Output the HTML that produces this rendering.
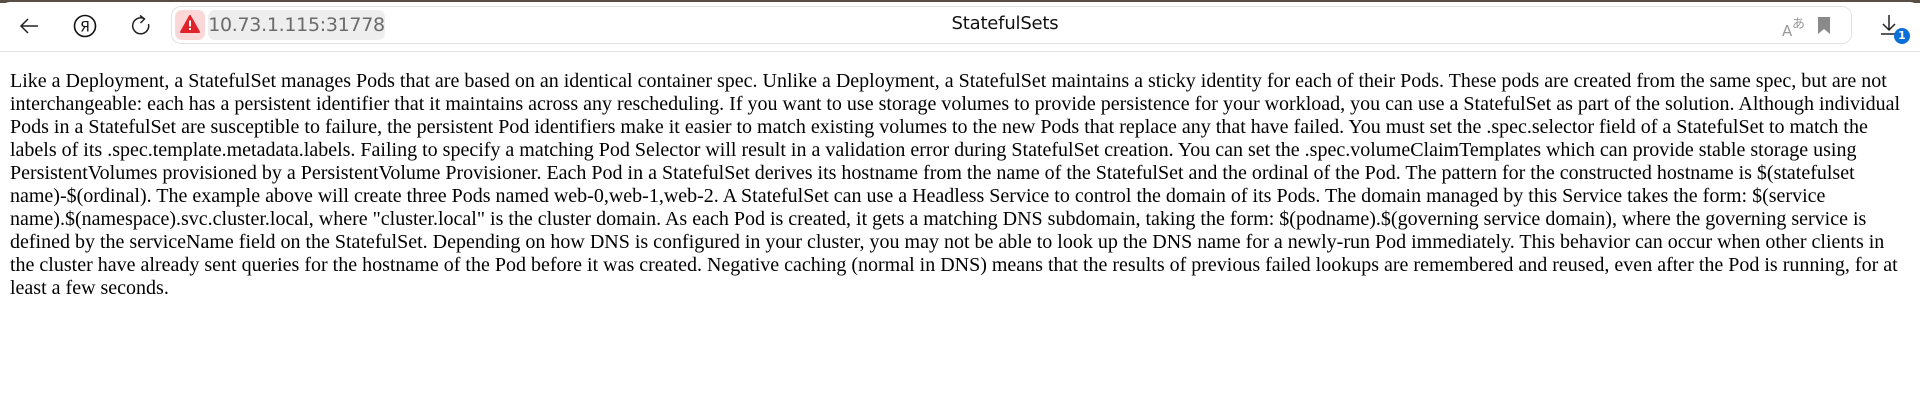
<!DOCTYPE html>
<html><head><meta charset="utf-8"><style>
html,body{margin:0;padding:0;background:#fff;width:1920px;height:400px;overflow:hidden}
.top{position:absolute;left:0;top:0;width:1920px;height:3px;background:#5a4e44}
.bar{position:absolute;left:0;top:2px;width:1920px;height:49px;background:#fff;border-bottom:1px solid #e3e3e3;border-radius:10px 10px 0 0}
.addr{position:absolute;left:171px;top:6px;width:1681px;height:38px;border:1px solid #e2e2e2;border-radius:10px;box-sizing:border-box}
.warn{position:absolute;left:175px;top:10px;width:30px;height:30px;background:#fbd7d8;border-radius:7px}
.url{position:absolute;left:208px;top:10px;width:177px;height:30px;background:#eeeeee;border-radius:7px;font:19px "DejaVu Sans","Liberation Sans",sans-serif;color:#6b6b6b;line-height:30px;text-align:center;letter-spacing:-0.3px}
.title{position:absolute;left:0;width:2010px;top:13px;text-align:center;font:18px "DejaVu Sans","Liberation Sans",sans-serif;color:#111;letter-spacing:-0.2px}
p{position:absolute;left:10px;top:70px;margin:0;font:20px/23px "Liberation Serif",serif;color:#000;white-space:nowrap}
</style></head><body>
<div class="top"></div>
<div class="bar"></div>
<svg style="position:absolute;left:18px;top:15px" width="22" height="22" viewBox="0 0 22 22"><path d="M20 11H3M10 4L3 11l7 7" fill="none" stroke="#222" stroke-width="1.5"/></svg>
<svg style="position:absolute;left:73px;top:14px" width="24" height="24" viewBox="0 0 24 24"><circle cx="12" cy="12" r="10.5" fill="none" stroke="#111" stroke-width="1.6"/><text x="12" y="17.5" text-anchor="middle" font-family="DejaVu Sans" font-size="14" fill="#111">Я</text></svg>
<svg style="position:absolute;left:130px;top:14px" width="22" height="24" viewBox="0 0 22 24"><path d="M14 4.5A8 8 0 1 0 18.5 10" fill="none" stroke="#222" stroke-width="1.5"/><path d="M10 1.5l4.5 3.5-4 4" fill="none" stroke="#222" stroke-width="1.5"/></svg>
<div class="addr"></div>
<div class="warn"></div>
<svg style="position:absolute;left:180px;top:15px" width="20" height="18" viewBox="0 0 20 18"><path d="M10 1L19 17H1Z" fill="#e0222b" stroke="#e0222b" stroke-width="2" stroke-linejoin="round"/><rect x="9" y="5.5" width="2" height="6" fill="#fff"/><rect x="9" y="13" width="2" height="2" fill="#fff"/></svg>
<div class="url">10.73.1.115:31778</div>
<div class="title">StatefulSets</div>
<div style="position:absolute;left:1782px;top:22px;font:15px 'DejaVu Sans',sans-serif;color:#999">A</div>
<div style="position:absolute;left:1792px;top:13px;font:13px 'Noto Sans CJK JP',sans-serif;color:#999">あ</div>
<svg style="position:absolute;left:1818px;top:17px" width="12" height="17" viewBox="0 0 12 17"><path d="M0 0H12V17L6 12 0 17Z" fill="#8a8a8a"/></svg>
<svg style="position:absolute;left:1880px;top:14px" width="22" height="22" viewBox="0 0 22 22"><path d="M9 1V16M3 10l6 6 6-6M1 20H17" fill="none" stroke="#222" stroke-width="1.5"/></svg>
<div style="position:absolute;left:1894px;top:28px;width:16px;height:16px;border-radius:50%;background:#0a6fd6;color:#fff;font:bold 11px 'DejaVu Sans',sans-serif;text-align:center;line-height:16px">1</div>
<p>Like a Deployment, a StatefulSet manages Pods that are based on an identical container spec. Unlike a Deployment, a StatefulSet maintains a sticky identity for each of their Pods. These pods are created from the same spec, but are not<br>interchangeable: each has a persistent identifier that it maintains across any rescheduling. If you want to use storage volumes to provide persistence for your workload, you can use a StatefulSet as part of the solution. Although individual<br>Pods in a StatefulSet are susceptible to failure, the persistent Pod identifiers make it easier to match existing volumes to the new Pods that replace any that have failed. You must set the .spec.selector field of a StatefulSet to match the<br>labels of its .spec.template.metadata.labels. Failing to specify a matching Pod Selector will result in a validation error during StatefulSet creation. You can set the .spec.volumeClaimTemplates which can provide stable storage using<br>PersistentVolumes provisioned by a PersistentVolume Provisioner. Each Pod in a StatefulSet derives its hostname from the name of the StatefulSet and the ordinal of the Pod. The pattern for the constructed hostname is $(statefulset<br>name)-$(ordinal). The example above will create three Pods named web-0,web-1,web-2. A StatefulSet can use a Headless Service to control the domain of its Pods. The domain managed by this Service takes the form: $(service<br>name).$(namespace).svc.cluster.local, where "cluster.local" is the cluster domain. As each Pod is created, it gets a matching DNS subdomain, taking the form: $(podname).$(governing service domain), where the governing service is<br>defined by the serviceName field on the StatefulSet. Depending on how DNS is configured in your cluster, you may not be able to look up the DNS name for a newly-run Pod immediately. This behavior can occur when other clients in<br>the cluster have already sent queries for the hostname of the Pod before it was created. Negative caching (normal in DNS) means that the results of previous failed lookups are remembered and reused, even after the Pod is running, for at<br>least a few seconds.</p>
</body></html>
